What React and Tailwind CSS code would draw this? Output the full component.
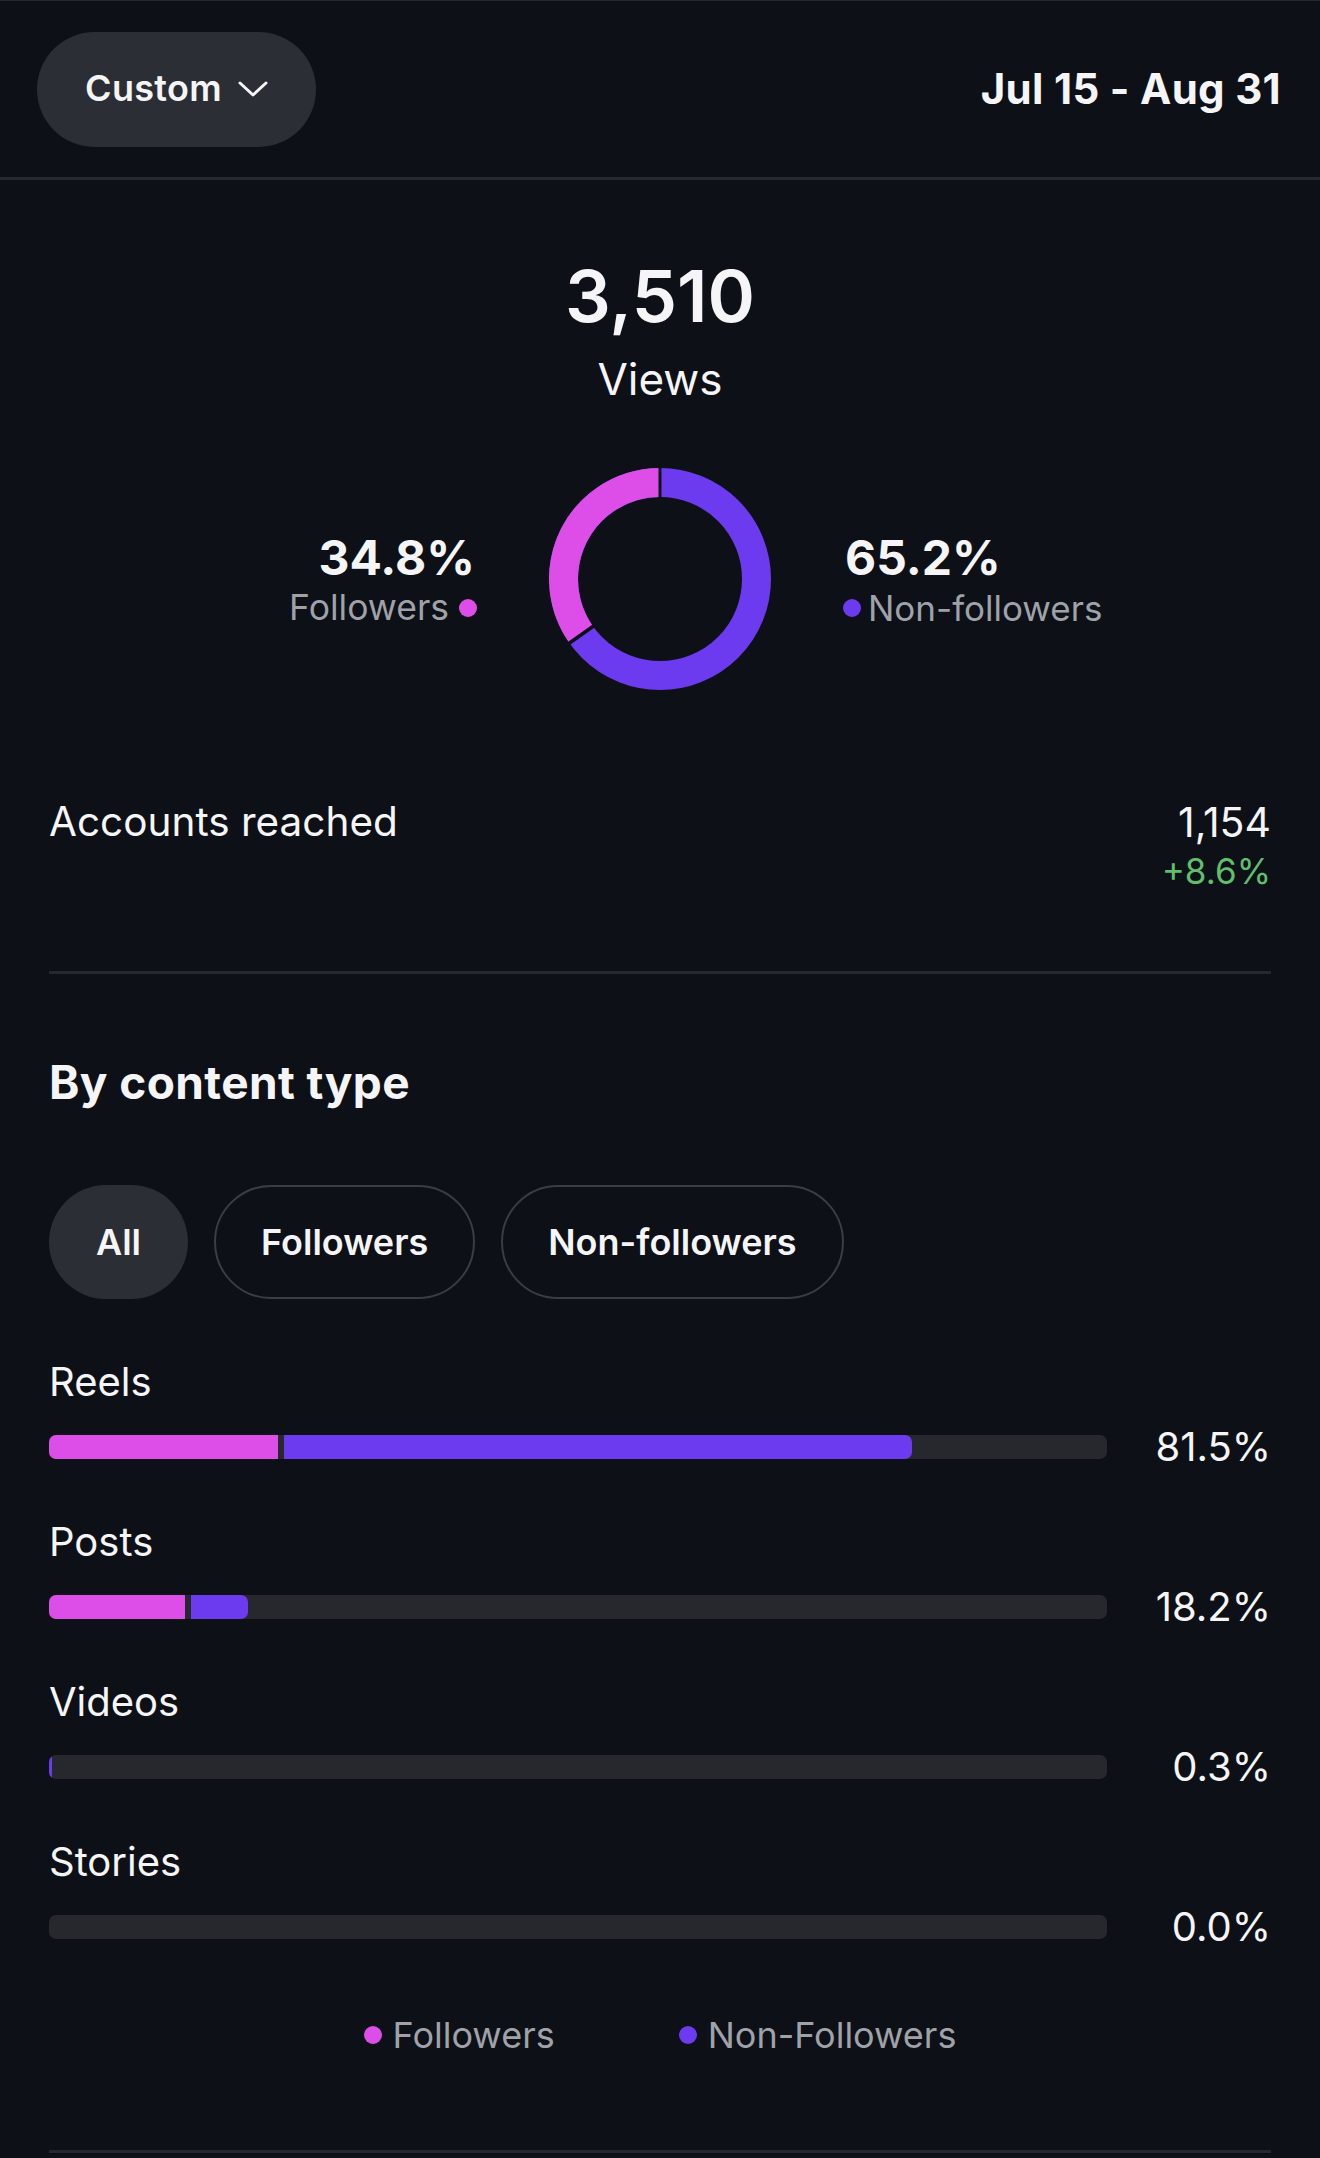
import React from "react";

const PINK = "#dd4de8";
const PURPLE = "#6d3bef";

const rows = [
  { label: "Reels", f: 21.6, n: 59.4, pct: "81.5%" },
  { label: "Posts", f: 12.9, n: 5.3, pct: "18.2%" },
  { label: "Videos", f: 0, n: 0.3, pct: "0.3%" },
  { label: "Stories", f: 0, n: 0, pct: "0.0%" },
];

function Donut() {
  const r = 96.5;
  const c = 2 * Math.PI * r;
  const fLen = 0.348 * c;
  const startDeg = -90 - 0.348 * 360;
  const gapAngle = (-90 - 0.348 * 360) * (Math.PI / 180);
  const gx1 = 111 + (r - 16) * Math.cos(gapAngle);
  const gy1 = 111 + (r - 16) * Math.sin(gapAngle);
  const gx2 = 111 + (r + 16) * Math.cos(gapAngle);
  const gy2 = 111 + (r + 16) * Math.sin(gapAngle);
  return (
    <svg width="222" height="222" viewBox="0 0 222 222">
      <circle cx="111" cy="111" r={r} fill="none" stroke={PURPLE} strokeWidth="29" />
      <circle
        cx="111"
        cy="111"
        r={r}
        fill="none"
        stroke={PINK}
        strokeWidth="29"
        strokeDasharray={`${fLen} ${c - fLen}`}
        transform={`rotate(${startDeg} 111 111)`}
      />
      <line x1="111" y1={111 - r - 16} x2="111" y2={111 - r + 16} stroke="#0d1016" strokeWidth="3" />
      <line x1={gx1} y1={gy1} x2={gx2} y2={gy2} stroke="#0d1016" strokeWidth="3.5" />
    </svg>
  );
}

export default function App() {
  return (
    <div
      className="w-[1320px] h-[2158px] bg-[#0d1016] text-[#f5f5f7] overflow-hidden border-t border-[#25282e]"
      style={{ fontFamily: "Inter, 'Noto Sans', sans-serif" }}
    >
      {/* Header */}
      <div className="h-[179px] flex items-center justify-between pl-[37px] pr-[39px] border-b-[3px] border-[#25282e]">
        <button className="h-[115px] w-[279px] rounded-full bg-[#2b2e34] flex items-center justify-center gap-[16px] pb-[2px]">
          <span className="text-[36px] leading-[44px] font-semibold tracking-[0.3px]">Custom</span>
          <svg width="30" height="18" viewBox="0 0 30 18" className="mt-[2px]">
            <path d="M2 3 L15 15 L28 3" fill="none" stroke="#f5f5f7" strokeWidth="3" strokeLinecap="round" strokeLinejoin="round" />
          </svg>
        </button>
        <div className="text-[42px] leading-[48px] font-bold tracking-[0.3px]">Jul 15 - Aug 31</div>
      </div>

      {/* Views summary */}
      <div className="flex flex-col items-center">
        <div className="mt-[80px] text-[72px] leading-[72px] font-semibold">3,510</div>
        <div className="mt-[25px] text-[44px] leading-[44px]">Views</div>
      </div>

      <div className="mt-[67px] grid grid-cols-[1fr_222px_1fr] items-start">
        <div className="flex flex-col items-end pr-[72px] mt-[64px]">
          <div className="text-[48px] leading-[52px] font-bold pr-[2px]">34.8%</div>
          <div className="mt-[1px] flex items-center gap-[10px] text-[35.5px] leading-[46px] text-[#9fa2a9]">
            <span>Followers</span>
            <span className="w-[18px] h-[18px] rounded-full bg-[#dd4de8]" />
          </div>
        </div>
        <Donut />
        <div className="flex flex-col items-start pl-[72px] mt-[64px]">
          <div className="text-[48px] leading-[52px] font-bold pl-[2px]">65.2%</div>
          <div className="mt-[1px] flex items-center gap-[7px] text-[35px] leading-[46px] text-[#9fa2a9]">
            <span className="w-[18px] h-[18px] rounded-full bg-[#6d3bef]" />
            <span>Non-followers</span>
          </div>
        </div>
      </div>

      <div className="px-[49px]">
        {/* Accounts reached */}
        <div className="mt-[108px] flex justify-between items-start">
          <div className="text-[40.5px] leading-[48px]">Accounts reached</div>
          <div className="flex flex-col items-end">
            <div className="text-[41px] leading-[48px]">1,154</div>
            <div className="mt-[5px] text-[35px] leading-[40px] text-[#5fbf6d]">+8.6%</div>
          </div>
        </div>
        <div className="mt-[80px] h-[3px] bg-[#25282e]" />

        {/* By content type */}
        <div className="mt-[82px] text-[46px] leading-[52px] font-bold tracking-[0.4px]">By content type</div>

        <div className="mt-[77px] flex gap-[26px]">
          <div className="h-[114px] px-[47px] rounded-full bg-[#2b2e34] flex items-center text-[36px] font-semibold">All</div>
          <div className="h-[114px] px-[45px] rounded-full border-2 border-[#3a3d44] flex items-center text-[36px] font-semibold">Followers</div>
          <div className="h-[114px] px-[45px] rounded-full border-2 border-[#3a3d44] flex items-center text-[36px] font-semibold">Non-followers</div>
        </div>

        <div className="mt-[59px] flex flex-col gap-[47px]">
          {rows.map((r) => (
            <div key={r.label}>
              <div className="text-[40px] leading-[48px]">{r.label}</div>
              <div className="mt-[17px] h-[48px] flex items-center">
                <div className="flex-1 h-[24px] rounded-[7px] bg-[#26282e] overflow-hidden flex">
                  {r.f > 0 && <div className="h-full bg-[#dd4de8]" style={{ width: `${r.f}%` }} />}
                  {r.n > 0 && (
                    <div
                      className={r.f > 0 ? "h-full bg-[#6d3bef] ml-[6px] rounded-r-[7px]" : "h-full bg-[#6d3bef] rounded-r-[7px]"}
                      style={{ width: `${r.n}%`, minWidth: "3px" }}
                    />
                  )}
                </div>
                <div className="w-[164px] text-right text-[40px] leading-[48px]">{r.pct}</div>
              </div>
            </div>
          ))}
        </div>

        <div className="mt-[62px] flex justify-center items-center gap-[124px] text-[36px] leading-[44px] text-[#9fa2a9]">
          <div className="flex items-center gap-[11px]">
            <span className="w-[18px] h-[18px] rounded-full bg-[#dd4de8]" />
            <span>Followers</span>
          </div>
          <div className="flex items-center gap-[11px]">
            <span className="w-[18px] h-[18px] rounded-full bg-[#6d3bef]" />
            <span>Non-Followers</span>
          </div>
        </div>

        <div className="mt-[93px] h-[3px] bg-[#25282e]" />
      </div>
    </div>
  );
}
